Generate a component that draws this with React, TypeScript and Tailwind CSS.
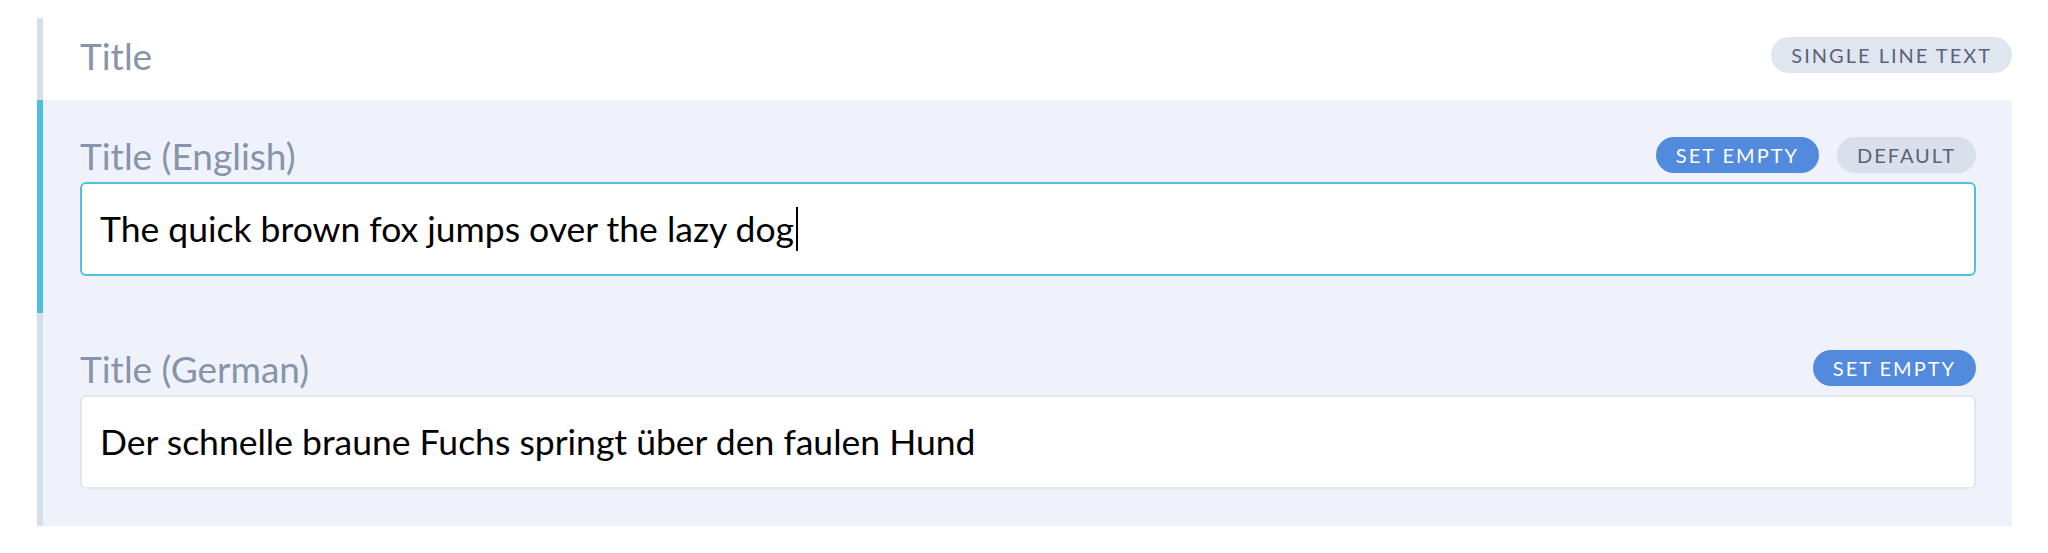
import React from "react";

type Tone = "blue" | "gray" | "light";

const Pill: React.FC<{ label: string; tone: Tone }> = ({ label, tone }) => {
  const tones: Record<Tone, string> = {
    blue: "bg-[#528ade] text-white",
    gray: "bg-[#d9e0eb] text-[#5b6279]",
    light: "bg-[#e0e6ef] text-[#5b6279]",
  };
  return (
    <span
      className={`inline-flex h-[36px] items-center rounded-full px-[20px] text-[20px] uppercase tracking-[0.1em] leading-none ${tones[tone]}`}
    >
      {label}
    </span>
  );
};

interface LocaleFieldProps {
  label: string;
  value: string;
  focused?: boolean;
  actions: { label: string; tone: Tone }[];
}

const LocaleField: React.FC<LocaleFieldProps> = ({ label, value, focused = false, actions }) => (
  <div
    className={`border-l-[6px] pl-[37px] pr-[36px] pt-[37px] pb-[37px] ${
      focused ? "border-[#4cbfdb]" : "border-[#d5dfec]"
    }`}
  >
    <div className="flex h-[36px] items-center justify-between">
      <span className="text-[37px] leading-none text-[#8794aa]">{label}</span>
      <div className="flex gap-[18px]">
        {actions.map((a) => (
          <Pill key={a.label} label={a.label} tone={a.tone} />
        ))}
      </div>
    </div>
    <div
      className={`mt-[9px] flex h-[94px] items-center rounded-[6px] border-2 bg-white px-[18px] ${
        focused ? "border-[#4fc0dc]" : "border-[#e3e5ea]"
      }`}
    >
      <span className="text-[35.5px] leading-none text-black">{value}</span>
      {focused && <span className="ml-[2px] h-[44px] w-[2px] bg-black" />}
    </div>
  </div>
);

export default function App() {
  return (
    <div
      className="min-h-screen bg-white pt-[18px] pl-[37px] pr-[36px]"
      style={{ fontFamily: "Lato, 'Noto Sans', sans-serif" }}
    >
      <div className="flex h-[82px] items-start justify-between border-l-[6px] border-[#d5dfec] pl-[37px] pt-[19px]">
        <span className="flex h-[36px] items-center text-[37px] leading-none text-[#8794aa]">Title</span>
        <Pill label="Single line text" tone="light" />
      </div>
      <div className="bg-[#eff2fa]">
        <LocaleField
          label="Title (English)"
          value="The quick brown fox jumps over the lazy dog"
          focused
          actions={[
            { label: "Set empty", tone: "blue" },
            { label: "Default", tone: "gray" },
          ]}
        />
        <LocaleField
          label="Title (German)"
          value="Der schnelle braune Fuchs springt über den faulen Hund"
          actions={[{ label: "Set empty", tone: "blue" }]}
        />
      </div>
    </div>
  );
}
